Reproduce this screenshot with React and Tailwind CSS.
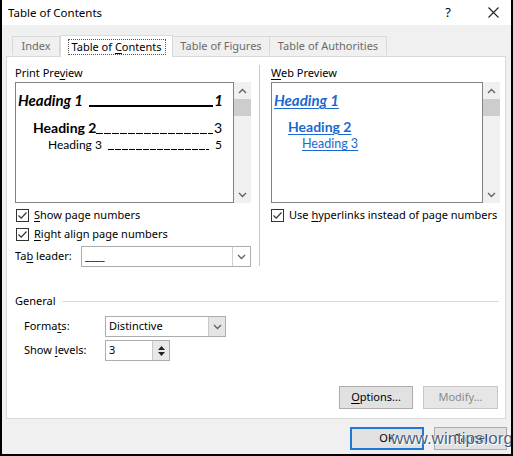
import React from 'react';

const ui = { fontFamily: '"Noto Sans", "Open Sans", sans-serif' };
const heading = { fontFamily: 'Lato, "Noto Sans", sans-serif' };

// small checked box like the Win32 one
const CheckBox = () => (
  <svg width="13" height="13" viewBox="0 0 13 13" className="shrink-0">
    <rect x="0.5" y="0.5" width="12" height="12" fill="#fff" stroke="#333" />
    <path d="M2.5 6.5 L5.2 9.2 L10.5 3.5" fill="none" stroke="#333" strokeWidth="1.2" />
  </svg>
);

const Chevron = ({ up }) => (
  <svg width="9" height="6" viewBox="0 0 9 6">
    <path d={up ? 'M1 5 L4.5 1.5 L8 5' : 'M1 1 L4.5 4.5 L8 1'} fill="none" stroke="#606060" strokeWidth="1.3" />
  </svg>
);

const ScrollBar = () => (
  <div className="w-[17px] h-full bg-[#f0f0f0] flex flex-col items-center">
    <div className="h-[17px] flex items-center justify-center"><Chevron up /></div>
    <div className="w-[17px] h-[17px] bg-[#cdcdcd]" />
    <div className="flex-1" />
    <div className="h-[17px] flex items-center justify-center"><Chevron /></div>
  </div>
);

const U = ({ children }) => <span className="underline underline-offset-2">{children}</span>;

const Btn = ({ children, disabled, primary, w }) => (
  <div
    className={`h-[23px] flex items-center justify-center text-[11px] ${w} ${
      primary ? 'border-2 border-[#1e78d7] bg-[#e1e1e1]' : 'border border-[#adadad] bg-[#e1e1e1]'
    } ${disabled ? 'text-[#8a8a8a] bg-[#e6e6e6] border-[#c7c7c7]' : 'text-black'}`}
  >
    {children}
  </div>
);

export default function App() {
  return (
    <div
      className="w-[513px] h-[456px] relative bg-[#f0f0f0] border-l-2 border-r-2 border-b-2 border-black flex flex-col text-black overflow-hidden"
      style={ui}
    >
      {/* title bar */}
      <div className="h-[25px] bg-white flex items-center pl-[6px] pr-[12px] text-[11.5px] shrink-0">
        <span>Table of Contents</span>
        <span className="ml-auto mr-[37px] text-[13px]">?</span>
        <svg width="11" height="11" viewBox="0 0 11 11">
          <path d="M0.5 0.5 L10.5 10.5 M10.5 0.5 L0.5 10.5" stroke="#222" strokeWidth="1.1" />
        </svg>
      </div>

      {/* tabs */}
      <div className="h-[31px] flex items-end pl-[10px] text-[11px] shrink-0">
        <div className="h-[19px] w-[48px] border border-b-0 border-[#d9d9d9] bg-[#f0f0f0] flex items-center justify-center text-[#6b6b6b] mb-[1px]">
          Index
        </div>
        <div className="h-[22px] w-[113px] border border-b-0 border-[#d9d9d9] bg-white flex items-center justify-center relative z-10 -mb-[1px]">
          <span className="border border-dotted border-[#555] px-[3px] leading-[14px]">
            Table of <U>C</U>ontents
          </span>
        </div>
        <div className="h-[19px] w-[97px] border border-b-0 border-l-0 border-[#d9d9d9] bg-[#f0f0f0] flex items-center justify-center text-[#6b6b6b] mb-[1px]">
          Table of Figures
        </div>
        <div className="h-[19px] w-[117px] border border-b-0 border-l-0 border-[#d9d9d9] bg-[#f0f0f0] flex items-center justify-center text-[#6b6b6b] mb-[1px]">
          Table of Authorities
        </div>
      </div>

      {/* panel */}
      <div className="ml-[4px] mr-[5px] h-[363px] bg-white border border-[#d9d9d9] shrink-0 pl-[8px] pr-[5px] pt-[8px] flex flex-col text-[11px]">
        <div className="flex">
          {/* left column */}
          <div className="w-[236px] flex flex-col">
            <div className="h-[17px] leading-[16px]">Print Pre<U>v</U>iew</div>
            <div className="h-[121px] flex">
              <div className="w-[219px] h-full border border-[#828282] px-[2px] pt-[8px] flex flex-col" style={heading}>
                <div className="flex items-end text-[15px] font-bold italic leading-[19px]">
                  <span className="shrink-0">Heading 1</span>
                  <div className="flex-1 h-[2px] bg-black ml-[6px] mb-[3px]" />
                  <span className="shrink-0 pl-[1px] pr-[8px]">1</span>
                </div>
                <div className="flex items-end text-[14px] font-bold leading-[17px] pl-[15px] mt-[9px]">
                  <span className="shrink-0">Heading 2</span>
                  <div className="flex-1 h-px mb-[2px] bg-[repeating-linear-gradient(90deg,#000_0_7px,transparent_7px_8px)]" />
                  <span className="shrink-0 pl-[1px] pr-[9px] font-normal">3</span>
                </div>
                <div className="flex items-end text-[12px] leading-[14px] pl-[30px] mt-[2px]">
                  <span className="shrink-0">Heading 3</span>
                  <div className="flex-1 h-px ml-[6px] mb-[2px] bg-[repeating-linear-gradient(90deg,#000_0_6px,transparent_6px_7px)]" />
                  <span className="shrink-0 pl-[6px] pr-[9px]">5</span>
                </div>
              </div>
              <ScrollBar />
            </div>
            <div className="h-[16px] mt-[4px] flex items-center gap-[5px] pl-[1px]">
              <CheckBox />
              <span><U>S</U>how page numbers</span>
            </div>
            <div className="h-[16px] mt-[3px] flex items-center gap-[5px] pl-[1px]">
              <CheckBox />
              <span><U>R</U>ight align page numbers</span>
            </div>
            <div className="h-[21px] mt-[4px] flex items-center">
              <span className="w-[66px]">Ta<U>b</U> leader:</span>
              <div className="flex-1 h-[21px] border border-[#adadad] flex">
                <span className="flex-1 pl-[3px] leading-[18px]">____</span>
                <div className="w-[18px] border-l border-[#d0d0d0] flex items-center justify-center">
                  <Chevron />
                </div>
              </div>
            </div>
          </div>

          {/* divider */}
          <div className="ml-[8px] w-px h-[201px] bg-[#c8c8c8]" />

          {/* right column */}
          <div className="ml-[11px] w-[229px] flex flex-col">
            <div className="h-[17px] leading-[16px]"><U>W</U>eb Preview</div>
            <div className="h-[121px] flex">
              <div className="w-[213px] h-full border border-[#828282] pl-[2px] pt-[8px] flex flex-col items-start text-[#1a68d0]" style={heading}>
                <span className="text-[15px] font-bold italic leading-[19px] underline underline-offset-2">Heading 1</span>
                <span className="text-[14px] font-bold leading-[17px] underline underline-offset-2 ml-[14px] mt-[8px]">Heading 2</span>
                <span className="text-[12.5px] leading-[15px] underline underline-offset-2 ml-[28px] mt-[1px]">Heading 3</span>
              </div>
              <ScrollBar />
            </div>
            <div className="h-[16px] mt-[4px] flex items-center gap-[5px] whitespace-nowrap">
              <CheckBox />
              <span>Use <U>h</U>yperlinks instead of page numbers</span>
            </div>
          </div>
        </div>

        {/* general */}
        <div className="mt-[26px] h-[16px] flex items-center">
          <span>General</span>
          <div className="flex-1 h-px bg-[#dadada] ml-[6px] mr-[1px]" />
        </div>
        <div className="mt-[7px] h-[21px] flex items-center pl-[9px]">
          <span className="w-[81px]">Forma<U>t</U>s:</span>
          <div className="w-[121px] h-[21px] border border-[#adadad] flex">
            <span className="flex-1 pl-[3px] leading-[18px]">Distinctive</span>
            <div className="w-[17px] bg-[#e5e5e5] border-l border-[#c8c8c8] flex items-center justify-center">
              <Chevron />
            </div>
          </div>
        </div>
        <div className="mt-[3px] h-[21px] flex items-center pl-[9px]">
          <span className="w-[81px]">Show <U>l</U>evels:</span>
          <div className="w-[65px] h-[21px] border border-[#adadad] flex">
            <span className="flex-1 pl-[3px] leading-[18px]">3</span>
            <div className="w-[17px] bg-[#e8e8e8] border-l border-[#c8c8c8] flex flex-col items-center justify-center gap-[2px]">
              <svg width="7" height="4" viewBox="0 0 7 4"><path d="M0 4 L3.5 0 L7 4Z" fill="#222" /></svg>
              <svg width="7" height="4" viewBox="0 0 7 4"><path d="M0 0 L3.5 4 L7 0Z" fill="#222" /></svg>
            </div>
          </div>
        </div>

        <div className="mt-auto mb-[9px] flex justify-end gap-[10px] pr-[2px]">
          <Btn w="w-[74px]"><U>O</U>ptions...</Btn>
          <Btn w="w-[75px]" disabled>Modify...</Btn>
        </div>
      </div>

      {/* dialog buttons */}
      <div className="flex-1 flex items-start justify-end gap-[10px] pt-[8px] pr-[4px]">
        <Btn w="w-[74px]" primary>OK</Btn>
        <Btn w="w-[73px]">Cancel</Btn>
      </div>

      {/* watermark */}
      <span
        className="absolute left-[389px] top-[429px] text-[17px] leading-[20px] text-[#4a6286] whitespace-nowrap"
        style={{ fontFamily: '"Liberation Sans", sans-serif', textShadow: '0 0 1px #fff, 1px 1px 0 #fff' }}
      >
        www.wintips.org
      </span>
    </div>
  );
}
